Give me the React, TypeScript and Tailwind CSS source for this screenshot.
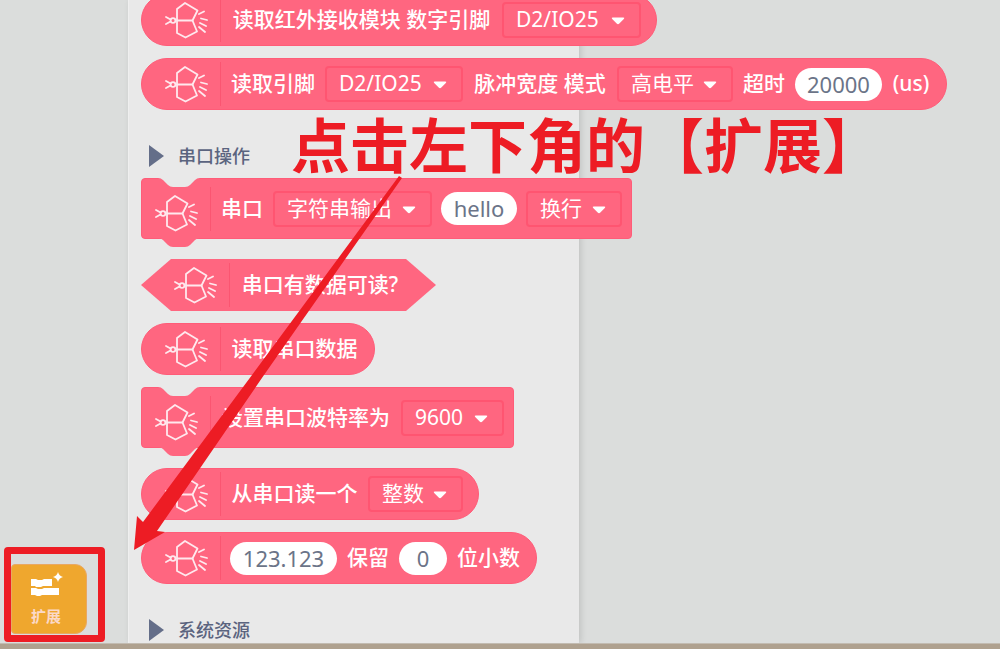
import type { ReactNode } from "react";
import clsx from "clsx";

const FONT = "font-['Noto_Sans','Noto_Sans_CJK_SC',sans-serif]";

function SensorIcon() {
	return (
		<svg
			width="44"
			height="38"
			viewBox="0 0 44 38"
			fill="none"
			stroke="#ffe9ee"
			strokeWidth="1.8"
			strokeLinejoin="round"
			strokeLinecap="round"
			className="shrink-0"
			aria-hidden="true"
		>
			<path d="M21 2 13 8v24l8.500 4.500L33 30.500 28.500 19.500l5-10z" />
			<path d="M13 19.500h15.500" />
			<circle cx="9" cy="19.500" r="2.400" />
			<path d="M2 16l4.500 2.500M2 23l4.500-2.500" />
			<path d="M35 13l5-2.500M37 17.500l6 1.500M36 22l6 3M35 26l6 5" />
		</svg>
	);
}

function Label({ children, width }: { children: ReactNode; width: string }) {
	return <span className={clsx("shrink-0 text-center font-medium", width)}>{children}</span>;
}

function Dropdown({ name, value, width }: { name: string; value: string; width: string }) {
	return (
		<div className={clsx("relative shrink-0", width)}>
			<select
				aria-label={name}
				className="h-9 w-full appearance-none rounded-sm border-2 border-[#ff5571] bg-transparent pl-3 text-inherit outline-none"
			>
				<option className="text-black">{value}</option>
			</select>
			<svg
				width="14"
				height="8"
				viewBox="0 0 14 8"
				className="pointer-events-none absolute right-4 top-[15px]"
				aria-hidden="true"
			>
				<path d="M2 0.5h10q2 0 .8 1.4L8.3 6.6q-1.3 1.2-2.6 0L1.2 1.9Q0 .5 2 .5z" fill="#fff" />
			</svg>
		</div>
	);
}

function Slot({ name, value, width }: { name: string; value: string; width: string }) {
	return (
		<input
			aria-label={name}
			defaultValue={value}
			className={clsx(
				"h-[33px] shrink-0 rounded-full bg-white text-center text-[22px] text-[#6b7488] outline-none",
				width
			)}
		/>
	);
}

function Divider() {
	return <div className="ml-3 mr-[9px] h-11 w-px shrink-0 bg-[#fb5571]" />;
}

function Reporter({ children }: { children: ReactNode }) {
	return (
		<div className="flex h-[52px] w-max items-center rounded-full border border-[#ff5c78] bg-[#ff6680] pl-[22px] pr-[15px]">
			<SensorIcon />
			<Divider />
			<div className="flex items-center gap-[9px]">{children}</div>
		</div>
	);
}

function BooleanBlock({ children }: { children: ReactNode }) {
	return (
		<div className="flex h-[52px] w-max items-center bg-[#ff6680] pl-8 pr-[35px] [clip-path:polygon(30px_0,calc(100%-30px)_0,100%_50%,calc(100%-30px)_100%,30px_100%,0_50%)]">
			<SensorIcon />
			<Divider />
			{children}
		</div>
	);
}

function Statement({ children }: { children: ReactNode }) {
	return (
		<div className="relative mb-2 flex h-[61px] w-max items-center rounded border border-[#ff5c78] bg-[#ff6680] pl-3 pr-[9px]">
			<svg width="44" height="9" viewBox="0 0 44 9" className="absolute left-4 -top-px" aria-hidden="true">
				<path d="M0 0q3 0 5 2l5 5q2 2 5 2h12q3 0 5-2l5-5q2-2 5-2z" fill="#e9e9e9" />
			</svg>
			<svg width="44" height="10" viewBox="0 0 44 10" className="absolute left-4 -bottom-[9px]" aria-hidden="true">
				<path d="M0 0v1q3 0 5 2l5 5q2 2 5 2h12q3 0 5-2l5-5q2-2 5-2V0z" fill="#ff6680" />
			</svg>
			<div className="pt-2">
				<SensorIcon />
			</div>
			<Divider />
			<div className="flex items-center gap-[9px]">{children}</div>
		</div>
	);
}

function SectionTitle({ children }: { children: ReactNode }) {
	return (
		<h2 className="mt-3 -mb-3 flex h-11 items-center gap-3.5 pl-2 text-[18px] font-medium text-[#5b647f]">
			<svg width="15" height="22" viewBox="0 0 15 22" aria-hidden="true">
				<path d="M0 0l15 11L0 22z" fill="#646e89" />
			</svg>
			{children}
		</h2>
	);
}

function Palette() {
	return (
		<section className="relative z-10 w-[451px] shrink-0 border-l border-[#efefef] bg-[#e9e9e9] shadow-[2px_0_6px_rgba(0,0,0,0.12)]">
			<div className="-mt-1.5 flex flex-col gap-3 whitespace-nowrap pl-3 text-[21px] text-white">
				<Reporter>
					<Label width="w-[263px]">读取红外接收模块 数字引脚</Label>
					<Dropdown name="数字引脚" value="D2/IO25" width="w-[139px]" />
				</Reporter>
				<Reporter>
					<Label width="w-[86px]">读取引脚</Label>
					<Dropdown name="引脚" value="D2/IO25" width="w-[138px]" />
					<Label width="w-[136px]">脉冲宽度 模式</Label>
					<Dropdown name="模式" value="高电平" width="w-[116px]" />
					<Label width="w-[44px]">超时</Label>
					<Slot name="超时" value="20000" width="w-[87px]" />
					<Label width="w-[40px]">(us)</Label>
				</Reporter>
				<SectionTitle>串口操作</SectionTitle>
				<Statement>
					<Label width="w-[44px]">串口</Label>
					<Dropdown name="输出格式" value="字符串输出" width="w-[159px]" />
					<Slot name="内容" value="hello" width="w-[76px]" />
					<Dropdown name="换行方式" value="换行" width="w-[96px]" />
				</Statement>
				<BooleanBlock>
					<Label width="w-[162px]">串口有数据可读?</Label>
				</BooleanBlock>
				<Reporter>
					<Label width="w-[129px]">读取串口数据</Label>
				</Reporter>
				<Statement>
					<Label width="w-[172px]">设置串口波特率为</Label>
					<Dropdown name="波特率" value="9600" width="w-[103px]" />
				</Statement>
				<Reporter>
					<Label width="w-[129px]">从串口读一个</Label>
					<Dropdown name="数据类型" value="整数" width="w-[95px]" />
				</Reporter>
				<Reporter>
					<Slot name="数值" value="123.123" width="w-[107px]" />
					<Label width="w-[44px]">保留</Label>
					<Slot name="小数位" value="0" width="w-[48px]" />
					<Label width="w-[65px]">位小数</Label>
				</Reporter>
				<SectionTitle>系统资源</SectionTitle>
			</div>
		</section>
	);
}

function Sidebar() {
	return (
		<aside className="flex w-32 shrink-0 flex-col justify-end pb-px pl-1">
			<div className="w-[101px] rounded-sm border-[7px] border-[#ed1c24] pb-px pr-[11px] pt-2.5">
				<button
					type="button"
					className="flex h-[70px] w-full flex-col items-center justify-center gap-2 rounded-r-xl rounded-l border border-[#e9a862] bg-[#efa72e] pr-1.5"
				>
					<svg width="34" height="26" viewBox="0 0 34 26" fill="#fff" aria-hidden="true">
						<path d="M2 7h5l2 1h4l2-1h8v7H14l-2 1H7l-1-1H2z" />
						<path d="M2 16h5l2 1h4l2-1h15v7H13l-2 1H8l-2-1H2z" />
						<path d="M29 0q1 4 5 5-4 1-5 5-1-4-5-5 4-1 5-5z" />
					</svg>
					<span className="text-[15px] font-bold leading-5 text-[#fbd9c8]">扩展</span>
				</button>
			</div>
		</aside>
	);
}

function Callout() {
	return (
		<div className="pointer-events-none absolute inset-0 z-20">
			<p className="absolute left-[291px] top-[109px] whitespace-nowrap font-['Noto_Sans_CJK_SC',sans-serif] text-[59px] font-bold leading-[68px] text-[#ed1c24]">
				点击左下角的【扩展】
			</p>
			<svg width="270" height="376" viewBox="0 0 270 376" className="absolute left-[133px] top-[175px]" aria-hidden="true">
				<path d="M266 1l3 2L131 200 24 356l8 1L1 375 4 341l6 6L119 200z" fill="#ed1c24" />
			</svg>
		</div>
	);
}

export default function App() {
	return (
		<div className={clsx("relative flex h-screen flex-col overflow-hidden bg-white", FONT)}>
			<div className="flex min-h-0 flex-1 overflow-hidden bg-[#dbdddc]">
				<Sidebar />
				<Palette />
				<main className="flex-1" />
			</div>
			<div className="mb-[7px] h-1.5 shrink-0 border-t border-[#c2bbb1] bg-[#afa18f]" />
			<Callout />
		</div>
	);
}
